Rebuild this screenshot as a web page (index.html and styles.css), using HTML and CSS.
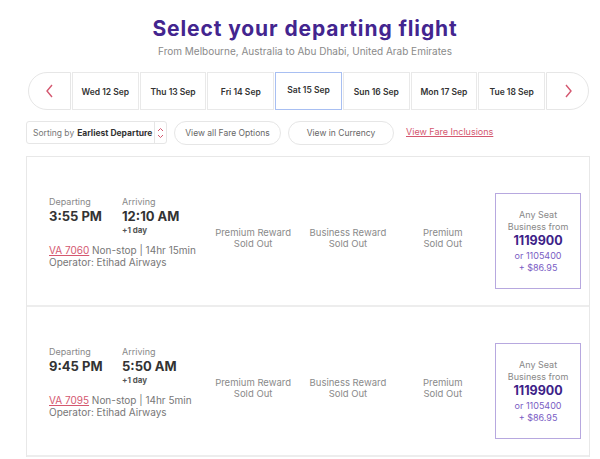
FILE: index.html
```html
<!DOCTYPE html>
<html lang="en">
<head>
    <meta charset="UTF-8">
    <meta name="viewport" content="width=device-width, initial-scale=1.0">
    <title>Select your departing flight</title>
    <link rel="stylesheet" href="styles.css">
</head>
<body>
    <h1 class="title">Select your departing flight</h1>
    <p class="subtitle">From Melbourne, Australia to Abu Dhabi, United Arab Emirates</p>

    <div class="date-bar">
        <button class="date-nav date-prev">
            <svg width="10" height="14" viewBox="0 0 10 14"><polyline points="7,1 2,7 7,13" fill="none" stroke="#d4576f" stroke-width="1.4"/></svg>
        </button>
        <div class="date-cell">Wed 12 Sep</div>
        <div class="date-cell">Thu 13 Sep</div>
        <div class="date-cell">Fri 14 Sep</div>
        <div class="date-cell selected">Sat 15 Sep</div>
        <div class="date-cell">Sun 16 Sep</div>
        <div class="date-cell">Mon 17 Sep</div>
        <div class="date-cell">Tue 18 Sep</div>
        <button class="date-nav date-next">
            <svg width="10" height="14" viewBox="0 0 10 14"><polyline points="3,1 8,7 3,13" fill="none" stroke="#d4576f" stroke-width="1.4"/></svg>
        </button>
    </div>

    <div class="controls">
        <div class="sort-select">
            <span class="sort-text">Sorting by <b>Earliest Departure</b></span>
            <span class="sort-arrows">
                <svg width="7" height="12" viewBox="0 0 7 12"><polyline points="1,4 3.5,1.5 6,4" fill="none" stroke="#d4576f" stroke-width="1"/><polyline points="1,8 3.5,10.5 6,8" fill="none" stroke="#d4576f" stroke-width="1"/></svg>
            </span>
        </div>
        <button class="pill">View all Fare Options</button>
        <button class="pill pill-wide">View in Currency</button>
        <a class="fare-link" href="#">View Fare Inclusions</a>
    </div>

    <div class="results">
        <div class="flight-row">
            <div class="flight-info">
                <div class="times">
                    <div class="time-col">
                        <div class="label">Departing</div>
                        <div class="time">3:55 PM</div>
                    </div>
                    <div class="time-col">
                        <div class="label">Arriving</div>
                        <div class="time">12:10 AM</div>
                        <div class="plus-day">+1 day</div>
                    </div>
                </div>
                <div class="flight-meta"><a href="#">VA 7060</a> Non-stop | 14hr 15min</div>
                <div class="flight-meta">Operator: Etihad Airways</div>
            </div>
            <div class="fare-col">Premium Reward<br>Sold Out</div>
            <div class="fare-col">Business Reward<br>Sold Out</div>
            <div class="fare-col">Premium<br>Sold Out</div>
            <div class="price-box">
                <div class="price-label">Any Seat<br>Business from</div>
                <div class="price-points">1119900</div>
                <div class="price-alt">or 1105400<br>+ $86.95</div>
            </div>
        </div>

        <div class="flight-row">
            <div class="flight-info">
                <div class="times">
                    <div class="time-col">
                        <div class="label">Departing</div>
                        <div class="time">9:45 PM</div>
                    </div>
                    <div class="time-col">
                        <div class="label">Arriving</div>
                        <div class="time">5:50 AM</div>
                        <div class="plus-day">+1 day</div>
                    </div>
                </div>
                <div class="flight-meta"><a href="#">VA 7095</a> Non-stop | 14hr 5min</div>
                <div class="flight-meta">Operator: Etihad Airways</div>
            </div>
            <div class="fare-col">Premium Reward<br>Sold Out</div>
            <div class="fare-col">Business Reward<br>Sold Out</div>
            <div class="fare-col">Premium<br>Sold Out</div>
            <div class="price-box">
                <div class="price-label">Any Seat<br>Business from</div>
                <div class="price-points">1119900</div>
                <div class="price-alt">or 1105400<br>+ $86.95</div>
            </div>
        </div>
    </div>
</body>
</html>
```

FILE: styles.css
```css
body {
    margin: 0;
    font-family: Inter, "Open Sans", sans-serif;
    color: #555555;
    background-color: #ffffff;
}

.title {
    margin: 15px 0 0;
    padding-left: 10px;
    text-align: center;
    font-size: 21px;
    line-height: 27px;
    font-weight: 700;
    color: #43258f;
    letter-spacing: 0.9px;
}

.subtitle {
    margin: 2px 0 0;
    padding-left: 10px;
    text-align: center;
    font-size: 10px;
    line-height: 14px;
    color: #8a8a8a;
}

/* date strip */
.date-bar {
    display: flex;
    gap: 1px;
    margin: 14px 11px 0 28px;
    height: 38px;
}

.date-nav {
    width: 43px;
    flex: none;
    display: flex;
    align-items: center;
    justify-content: center;
    background: #ffffff;
    border: 1px solid #e6e6e6;
    padding: 0;
}

.date-prev {
    border-radius: 19px 0 0 19px;
}

.date-next {
    border-radius: 0 19px 19px 0;
}

.date-cell {
    flex: 1;
    display: flex;
    align-items: center;
    justify-content: center;
    border: 1px solid #e9e9e9;
    font-size: 8.5px;
    font-weight: 600;
    color: #333333;
    padding-top: 1px;
}

.date-cell.selected {
    border-color: #a8bff2;
    padding-top: 0;
    padding-bottom: 2px;
}

/* sort + filters */
.controls {
    display: flex;
    align-items: center;
    margin: 11px 0 0 26px;
    height: 23px;
}

.sort-select {
    display: flex;
    align-items: stretch;
    width: 139px;
    height: 21px;
    border: 1px solid #e6e6e6;
    border-radius: 3px;
}

.sort-text {
    flex: 1;
    display: flex;
    align-items: center;
    padding-left: 6px;
    font-size: 8.5px;
    color: #777777;
    white-space: nowrap;
    overflow: hidden;
}

.sort-text b {
    color: #333333;
    margin-left: 3px;
}

.sort-arrows {
    width: 11px;
    flex: none;
    display: flex;
    align-items: center;
    justify-content: center;
    border-left: 1px solid #e6e6e6;
}

.pill {
    margin-left: 7px;
    height: 24px;
    width: 107px;
    border: 1px solid #e6e6e6;
    border-radius: 12px;
    background: #ffffff;
    font-family: inherit;
    font-size: 8.5px;
    color: #666666;
    padding: 0;
}

.pill-wide {
    width: 106px;
}

.fare-link {
    margin: 0 0 2px 12px;
    font-size: 9px;
    color: #d4576f;
    text-decoration: underline;
}

/* results */
.results {
    margin: 12px 10px 0 26px;
    border: 1px solid #e8e8e8;
    border-bottom: none;
}

.flight-row {
    display: flex;
    align-items: center;
    height: 96px;
    padding: 36px 8px 16px 22px;
    border-bottom: 2px solid #ededed;
}

.flight-info {
    width: 157px;
    margin-bottom: 18px;
}

.times {
    display: flex;
}

.time-col {
    width: 73px;
}

.label {
    font-size: 9px;
    line-height: 12px;
    color: #888888;
}

.time {
    font-size: 13px;
    line-height: 16px;
    font-weight: 700;
    color: #333333;
}

.plus-day {
    margin-top: 1px;
    font-size: 8px;
    line-height: 10px;
    font-weight: 700;
    color: #555555;
}

.flight-meta {
    font-size: 10px;
    line-height: 12.2px;
    color: #777777;
    white-space: nowrap;
}

.times + .flight-meta {
    margin-top: 9px;
}

.flight-meta a {
    color: #d4576f;
}

.fare-col {
    width: 95px;
    text-align: center;
    font-size: 9.5px;
    line-height: 11.5px;
    color: #8a8a8a;
    margin-bottom: 6px;
}

.price-box {
    margin-left: 5px;
    width: 84px;
    height: 94px;
    border: 1px solid #b7a8df;
    display: flex;
    flex-direction: column;
    justify-content: center;
    text-align: center;
}

.price-label {
    font-size: 9px;
    line-height: 11.5px;
    color: #888888;
}

.price-points {
    font-size: 12.5px;
    line-height: 18px;
    font-weight: 700;
    color: #3d2288;
}

.price-alt {
    font-size: 9px;
    line-height: 11.5px;
    color: #7a5cc4;
}
```
